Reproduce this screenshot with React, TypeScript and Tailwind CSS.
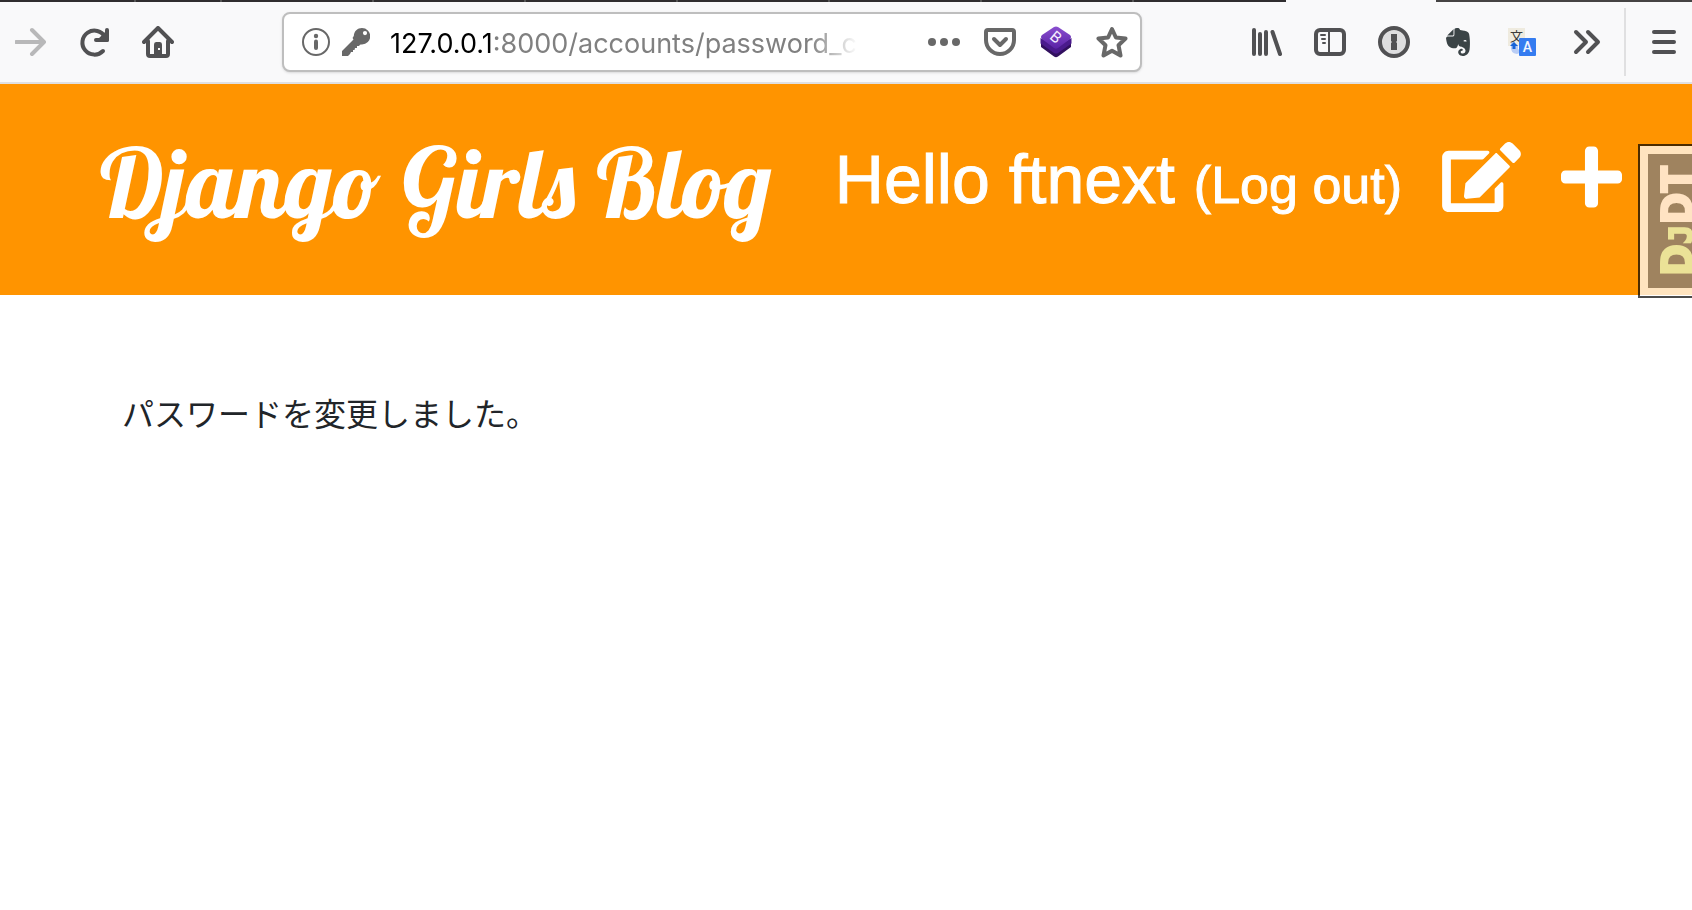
import React from "react";
import { FaEdit, FaPlus, FaEvernote } from "react-icons/fa";

const toolButton = "flex h-14 w-16 shrink-0 items-center justify-center text-[#515153]";
const pageAction = "flex h-full w-14 shrink-0 items-center justify-center text-[#686868]";

function ForwardIcon() {
  return (
    <svg width="32" height="32" viewBox="0 0 32 32" fill="none" stroke="currentColor" strokeWidth="4" strokeLinecap="round" strokeLinejoin="round">
      <path d="M1 16H28M17 4L29 16L17 28" />
    </svg>
  );
}

function ReloadIcon() {
  return (
    <svg width="32" height="32" viewBox="0 0 32 32" fill="none" stroke="currentColor" strokeWidth="4" strokeLinecap="round" strokeLinejoin="round">
      <path d="M25 25A12 12 0 1 1 27 11" />
      <path d="M29 4V14H18" />
      <path d="M29 7V14H22Z" fill="currentColor" />
    </svg>
  );
}

function HomeIcon() {
  return (
    <svg width="32" height="32" viewBox="0 0 32 32" fill="none" stroke="currentColor" strokeWidth="4" strokeLinecap="round" strokeLinejoin="round">
      <path d="M2 16L16 2L30 16" />
      <path d="M6 15V28Q6 30 8 30H24Q26 30 26 28V15" />
      <path d="M12 29V18.500Q12 16 14 16H18Q20 16 20 18.500V29Z" fill="currentColor" stroke="none" />
      <rect x="16" y="22" width="2" height="2" fill="#f9f9fa" stroke="none" />
    </svg>
  );
}

function InfoIcon() {
  return (
    <svg width="28" height="28" viewBox="0 0 28 28" fill="none" stroke="currentColor">
      <circle cx="14" cy="14" r="13" strokeWidth="2" />
      <path d="M14 13.500V20" strokeWidth="4" strokeLinecap="round" />
      <circle cx="14" cy="8" r="2.200" fill="currentColor" stroke="none" />
    </svg>
  );
}

function KeyIcon() {
  return (
    <svg width="28" height="28" viewBox="0 0 28 28" fill="currentColor">
      <path fillRule="evenodd" d="M20 0a8 8 0 0 1 0 16.500c-1 0-1.500 0-2 .2l-1 1.300h-2v2h-2l-.5 2H11v2H9l-1 2-2 2H0v-5L11.500 11.500c-.8-.8-1.500-1.500.3-3.500C12 3 15.500 0 20 0ZM23 3a2 2 0 1 0 0 4.200A2 2 0 0 0 23 3Z" />
    </svg>
  );
}

function DotsIcon() {
  return (
    <svg width="32" height="32" viewBox="0 0 32 32" fill="currentColor">
      <circle cx="4" cy="16" r="4" />
      <circle cx="16" cy="16" r="4" />
      <circle cx="28" cy="16" r="4" />
    </svg>
  );
}

function PocketIcon() {
  return (
    <svg width="32" height="32" viewBox="0 0 32 32" fill="none" stroke="currentColor" strokeWidth="4" strokeLinecap="round" strokeLinejoin="round">
      <path d="M4 4H28Q30 4 30 6V14A14 14 0 0 1 2 14V6Q2 4 4 4Z" />
      <path d="M10 13L16 19L22 13" />
    </svg>
  );
}

function StackIcon() {
  return (
    <svg width="32" height="32" viewBox="0 0 32 32">
      <defs>
        <linearGradient id="stack-top" x1="0" y1="0" x2="0" y2="1">
          <stop offset="0" stopColor="#8a4fd0" />
          <stop offset="1" stopColor="#5a22a5" />
        </linearGradient>
      </defs>
      <path d="M1 16L16 23L31 16V21L18 30.500Q16 32 14 30.500L1 21Z" fill="#32105f" />
      <path d="M0.500 12L16 20L31.500 12V17.500L18 27Q16 28 14 27L0.500 17.500Z" fill="#4a1a8c" />
      <path d="M14 1Q16 0 18 1L30 9Q32 11 30 13L18 22Q16 23.500 14 22L2 13Q0 11 2 9Z" fill="url(#stack-top)" />
      <text x="16" y="16.500" transform="rotate(40 16 11)" textAnchor="middle" fontSize="15" fill="#f4edff" className="font-['Inter',sans-serif]">B</text>
    </svg>
  );
}

function StarIcon() {
  return (
    <svg width="32" height="32" viewBox="0 0 32 32" fill="none" stroke="currentColor" strokeWidth="4" strokeLinejoin="round">
      <path d="M16 3L19.900 11.500L29.500 12.500L22.500 19.200L24.500 29.500L16 24.700L7.500 29.500L9.500 19.200L2.500 12.500L12.100 11.500Z" />
    </svg>
  );
}

function LibraryIcon() {
  return (
    <svg width="32" height="32" viewBox="0 0 32 32" fill="none" stroke="currentColor" strokeWidth="4" strokeLinecap="round">
      <path d="M4 4V28M10 8V28M16 6V28M22.500 6L30 28" />
    </svg>
  );
}

function SidebarIcon() {
  return (
    <svg width="32" height="32" viewBox="0 0 32 32" fill="none" stroke="currentColor" strokeWidth="4" strokeLinecap="round">
      <rect x="2" y="4" width="28" height="24" rx="4" />
      <path d="M15 4V28" strokeWidth="2" />
      <path d="M7 9H11M8 13H11M9 17H11" strokeWidth="2" />
    </svg>
  );
}

function OnePasswordIcon() {
  return (
    <svg width="32" height="32" viewBox="0 0 32 32">
      <circle cx="16" cy="16" r="14" fill="#dededf" stroke="currentColor" strokeWidth="4" />
      <path d="M13 8H19V15L18 16L19 17V24H13V17L14 16L13 15Z" fill="currentColor" />
    </svg>
  );
}

function TranslateIcon() {
  return (
    <svg width="28" height="28" viewBox="0 0 28 28">
      <rect x="0" y="0" width="17" height="18" fill="#efebdf" />
      <text x="8.500" y="12.500" textAnchor="middle" fontSize="13" fill="#3c3c3c" className="font-['Noto_Sans_CJK_JP',sans-serif]">文</text>
      <path d="M3 18Q2 25 9 26L14 24L10 21V17H7V14.500H3Z" fill="#b9cdf5" />
      <path d="M6 14L10 18H7.500V21H4.500V18H2Z" fill="#1663d8" />
      <rect x="11" y="10" width="17" height="18" rx="1" fill="#357cf0" />
      <text x="19.500" y="24" textAnchor="middle" fontSize="14" fill="#f2f6ff" className="font-['Roboto',sans-serif] font-medium">A</text>
    </svg>
  );
}

function OverflowIcon() {
  return (
    <svg width="32" height="32" viewBox="0 0 32 32" fill="none" stroke="currentColor" strokeWidth="4" strokeLinecap="round" strokeLinejoin="round">
      <path d="M6 6L16 16L6 26M18 6L28 16L18 26" />
    </svg>
  );
}

function MenuIcon() {
  return (
    <svg width="32" height="32" viewBox="0 0 32 32" fill="none" stroke="currentColor" strokeWidth="4" strokeLinecap="round">
      <path d="M6 6H26M6 16H26M6 26H26" />
    </svg>
  );
}

function TabStrip() {
  return (
    <div className="flex h-0.5 bg-[#2f2d2f]">
      <div className="w-[136px] border-r-2 border-[#555]" />
      <div className="w-[86px] border-r-2 border-[#555]" />
      <div className="w-[152px] border-r-2 border-[#555]" />
      <div className="w-[152px] border-r-2 border-[#555]" />
      <div className="w-[152px] border-r-2 border-[#555]" />
      <div className="w-[152px] border-r-2 border-[#555]" />
      <div className="w-[152px] border-r-2 border-[#555]" />
      <div className="w-[152px] border-r-2 border-[#555]" />
      <div className="w-[152px]" />
      <div className="w-[150px] bg-[#f9f9fa]" />
      <div className="flex-1 bg-[#454343]" />
    </div>
  );
}

function AddressBar() {
  return (
    <div className="flex h-[60px] min-w-0 flex-1 items-center rounded-lg border-2 border-[#bebebe] bg-white pl-[18px] shadow-sm">
      <button aria-label="Site information" className="mr-3 shrink-0 text-[#686868]"><InfoIcon /></button>
      <button aria-label="Saved login" className="mr-5 shrink-0 text-[#686868]"><KeyIcon /></button>
      <div className="min-w-0 flex-1 whitespace-nowrap pt-1 font-['Inter',sans-serif] text-[27px] leading-10 text-[#808080] [mask-image:linear-gradient(to_right,black_420px,transparent_468px)]">
        <span className="text-black">127.0.0.1</span>:8000/accounts/password_c
      </div>
      <div className="ml-4 flex h-full shrink-0">
        <button aria-label="Page actions" className={pageAction}><DotsIcon /></button>
        <button aria-label="Save to Pocket" className={pageAction}><PocketIcon /></button>
        <button aria-label="Bootstrap" className={pageAction}><StackIcon /></button>
        <button aria-label="Bookmark this page" className={pageAction}><StarIcon /></button>
      </div>
    </div>
  );
}

function Toolbar() {
  return (
    <div className="flex h-[82px] items-center border-b-2 border-[#e0e0e1] bg-[#f9f9fa]">
      <button aria-label="Forward" disabled className="flex h-14 w-[62px] shrink-0 items-center justify-center text-[#b8b8b9]"><ForwardIcon /></button>
      <button aria-label="Reload" className={toolButton}><ReloadIcon /></button>
      <button aria-label="Home" className={toolButton}><HomeIcon /></button>
      <div className="w-[92px] shrink-0" />
      <AddressBar />
      <div className="w-[92px] shrink-0" />
      <button aria-label="Library" className={toolButton}><LibraryIcon /></button>
      <button aria-label="Sidebars" className={toolButton}><SidebarIcon /></button>
      <button aria-label="1Password" className={toolButton}><OnePasswordIcon /></button>
      <button aria-label="Evernote" className={toolButton}><FaEvernote className="size-8 text-[#3b4446]" /></button>
      <button aria-label="Translate" className={toolButton}><TranslateIcon /></button>
      <button aria-label="More tools" className={toolButton}><OverflowIcon /></button>
      <div className="ml-1.5 mr-2.5 h-[68px] w-0.5 shrink-0 bg-[#e0e0e1]" />
      <button aria-label="Open menu" className="flex size-14 shrink-0 items-center justify-center text-[#515153]"><MenuIcon /></button>
    </div>
  );
}

function DebugHandle() {
  return (
    <a href="#debug" aria-label="Show toolbar" className="absolute right-0 top-[144px] h-[154px] w-[54px] overflow-hidden border-2 border-r-0 border-black/70 bg-white/75 bg-clip-padding py-2 pl-2">
      <div className="flex h-full w-16 rotate-180 items-start justify-start bg-[#9f835f] pt-3 pr-2 font-['DejaVu_Sans_Condensed','DejaVu_Sans',sans-serif] text-[43px] font-bold leading-none text-[#ffe3c3] [-webkit-text-stroke:2px] [text-orientation:sideways] [writing-mode:vertical-rl]">
        <span><span className="text-[#ebe297]">D<span className="font-['DejaVu_Sans_Mono',monospace] text-[32px]">J</span></span>DT</span>
      </div>
    </a>
  );
}

export default function App() {
  return (
    <div className="relative min-h-screen overflow-hidden bg-white">
      <TabStrip />
      <Toolbar />
      <header className="flex h-[211px] items-start justify-between bg-[#ff9400] pl-[100px] pr-[70px] text-white">
        <h1 className="whitespace-nowrap pt-[42px] font-['Lobster',cursive] text-[96px] font-normal leading-[112px]">
          <a href="#home">Django Girls Blog</a>
        </h1>
        <div className="flex items-start whitespace-nowrap pt-[58px]">
          <p className="font-['Liberation_Sans',sans-serif] text-[68px] leading-[74px] [-webkit-text-stroke:1px]">
            Hello ftnext <a href="#logout" className="text-[52px]">(Log out)</a>
          </p>
          <a href="#edit" aria-label="Edit drafts" className="ml-10"><FaEdit className="h-[70px] w-[79px]" /></a>
          <a href="#new" aria-label="New post" className="ml-10"><FaPlus className="h-[70px] w-[61px]" /></a>
        </div>
      </header>
      <main className="px-[122px] pt-[93px]">
        <p className="font-['Noto_Sans_CJK_JP',sans-serif] text-[32px] leading-[48px] text-[#212529]">パスワードを変更しました。</p>
      </main>
      <DebugHandle />
    </div>
  );
}
